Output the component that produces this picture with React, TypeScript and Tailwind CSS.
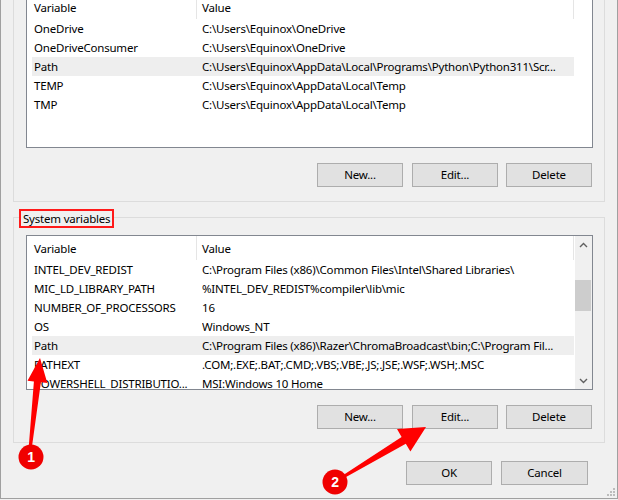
import React from "react";

type Row = { name: string; value: string; selected?: boolean };

const USER_ROWS: Row[] = [
  { name: "OneDrive", value: "C:\\Users\\Equinox\\OneDrive" },
  { name: "OneDriveConsumer", value: "C:\\Users\\Equinox\\OneDrive" },
  {
    name: "Path",
    value: "C:\\Users\\Equinox\\AppData\\Local\\Programs\\Python\\Python311\\Scr...",
    selected: true,
  },
  { name: "TEMP", value: "C:\\Users\\Equinox\\AppData\\Local\\Temp" },
  { name: "TMP", value: "C:\\Users\\Equinox\\AppData\\Local\\Temp" },
];

const SYSTEM_ROWS: Row[] = [
  {
    name: "INTEL_DEV_REDIST",
    value: "C:\\Program Files (x86)\\Common Files\\Intel\\Shared Libraries\\",
  },
  { name: "MIC_LD_LIBRARY_PATH", value: "%INTEL_DEV_REDIST%compiler\\lib\\mic" },
  { name: "NUMBER_OF_PROCESSORS", value: "16" },
  { name: "OS", value: "Windows_NT" },
  {
    name: "Path",
    value: "C:\\Program Files (x86)\\Razer\\ChromaBroadcast\\bin;C:\\Program Fil...",
    selected: true,
  },
  { name: "PATHEXT", value: ".COM;.EXE;.BAT;.CMD;.VBS;.VBE;.JS;.JSE;.WSF;.WSH;.MSC" },
  { name: "POWERSHELL_DISTRIBUTIO...", value: "MSI:Windows 10 Home" },
];

function Button({ label, className }: { label: string; className?: string }) {
  return (
    <div
      className={`h-[24px] flex items-center justify-center bg-[#e1e1e1] border border-[#adadad] text-black ${className ?? ""}`}
    >
      {label}
    </div>
  );
}

function Chevron({ up }: { up?: boolean }) {
  return (
    <svg width="9" height="6" viewBox="0 0 9 6">
      <path
        d={up ? "M1 5 L4.5 1.5 L8 5" : "M1 1 L4.5 4.5 L8 1"}
        fill="none"
        stroke="#606060"
        strokeWidth="1.4"
      />
    </svg>
  );
}

function ListView({
  rows,
  scroll,
  className,
}: {
  rows: Row[];
  scroll?: boolean;
  className?: string;
}) {
  return (
    <div className={`flex bg-white border border-[#828790] overflow-hidden ${className ?? ""}`}>
      <div className="flex-1 flex flex-col overflow-hidden">
        <div className="h-[24px] shrink-0 flex">
          <div className="w-[170px] pl-[7px] pt-[2px] flex items-center border-r border-[#e5e5e5]">
            Variable
          </div>
          <div className="w-[377px] pl-[5px] pt-[2px] flex items-center border-r border-[#e5e5e5]">
            Value
          </div>
        </div>
        {rows.map((row) => (
          <div
            key={row.name}
            className={`ml-[5px] w-[542px] h-[19px] shrink-0 flex items-center whitespace-nowrap ${
              row.selected ? "bg-[#eeeeee]" : ""
            }`}
          >
            <div className="w-[170px] pl-[2px] overflow-hidden">{row.name}</div>
            <div className="flex-1 overflow-hidden">{row.value}</div>
          </div>
        ))}
      </div>
      {scroll ? (
        <div className="w-[17px] shrink-0 bg-[#f0f0f0] flex flex-col">
          <div className="h-[17px] flex items-center justify-center">
            <Chevron up />
          </div>
          <div className="flex-1">
            <div className="mt-[27px] h-[31px] w-[16px] bg-[#cdcdcd]" />
          </div>
          <div className="h-[17px] flex items-center justify-center">
            <Chevron />
          </div>
        </div>
      ) : (
        <div className="w-[17px] shrink-0" />
      )}
    </div>
  );
}

function Annotations() {
  return (
    <svg
      className="absolute inset-0 pointer-events-none"
      width="618"
      height="500"
      viewBox="0 0 618 500"
    >
      <polygon
        points="40,358 47.3,383 40.9,382.3 31.5,450 28.5,450 33.9,381.5 27.5,380.8"
        fill="#ff0000"
      />
      <polygon
        points="426,427 397,429 401.6,437 342.2,475.7 343.8,478.3 405.8,443.7 410.4,451.5"
        fill="#ff0000"
      />
      <circle cx="31" cy="457" r="12.5" fill="#f00000" />
      <circle cx="335" cy="482" r="12.5" fill="#f00000" />
      <text
        x="31"
        y="462"
        textAnchor="middle"
        fill="#ffffff"
        fontSize="14"
        fontWeight="bold"
        fontFamily="Liberation Sans, Arial, sans-serif"
      >
        1
      </text>
      <text
        x="335"
        y="487"
        textAnchor="middle"
        fill="#ffffff"
        fontSize="14"
        fontWeight="bold"
        fontFamily="Liberation Sans, Arial, sans-serif"
      >
        2
      </text>
    </svg>
  );
}

export default function App() {
  return (
    <div className="relative w-[618px] h-[500px] overflow-hidden bg-[#f0f0f0] text-[11.5px] tracking-[-0.2px] leading-[16px] text-black font-['Noto_Sans',sans-serif]">
      <div className="h-[499px] border-l border-r border-b border-[#a0a0a0] px-[12px] flex flex-col">
        {/* user variables */}
        <div className="h-[202px] shrink-0 border-l border-r border-b border-[#dcdcdc] pl-[12px] pr-[11px] flex flex-col">
          <ListView rows={USER_ROWS} className="-mt-[6px] h-[154px] shrink-0" />
          <div className="mt-[15px] flex justify-end pr-[1px]">
            <Button label="New..." className="w-[86px]" />
            <Button label="Edit..." className="w-[86px] ml-[9px]" />
            <Button label="Delete" className="w-[86px] ml-[8px]" />
          </div>
        </div>

        {/* system variables */}
        <div className="mt-[15px] h-[226px] shrink-0 border border-[#dcdcdc] pl-[12px] pr-[11px] flex flex-col">
          <div className="-mt-[9px] -ml-[7px] h-[19px] w-fit px-[2px] flex items-center border-2 border-[#ff1a1a] bg-[#f0f0f0]">
            System variables
          </div>
          <ListView rows={SYSTEM_ROWS} scroll className="mt-[7px] h-[155px] shrink-0" />
          <div className="mt-[15px] flex justify-end pr-[1px]">
            <Button label="New..." className="w-[86px]" />
            <Button label="Edit..." className="w-[86px] ml-[9px]" />
            <Button label="Delete" className="w-[86px] ml-[8px]" />
          </div>
        </div>

        <div className="mt-[18px] flex justify-end pr-[17px]">
          <Button label="OK" className="w-[86px]" />
          <Button label="Cancel" className="w-[87px] ml-[9px]" />
        </div>
      </div>

      {/* resize grip */}
      <svg className="absolute right-[2px] bottom-[3px]" width="9" height="9" viewBox="0 0 9 9">
        <rect x="6" y="0" width="2" height="2" fill="#bcbcbc" />
        <rect x="3" y="3" width="2" height="2" fill="#bcbcbc" />
        <rect x="6" y="3" width="2" height="2" fill="#bcbcbc" />
        <rect x="0" y="6" width="2" height="2" fill="#bcbcbc" />
        <rect x="3" y="6" width="2" height="2" fill="#bcbcbc" />
        <rect x="6" y="6" width="2" height="2" fill="#bcbcbc" />
      </svg>

      <Annotations />
    </div>
  );
}
